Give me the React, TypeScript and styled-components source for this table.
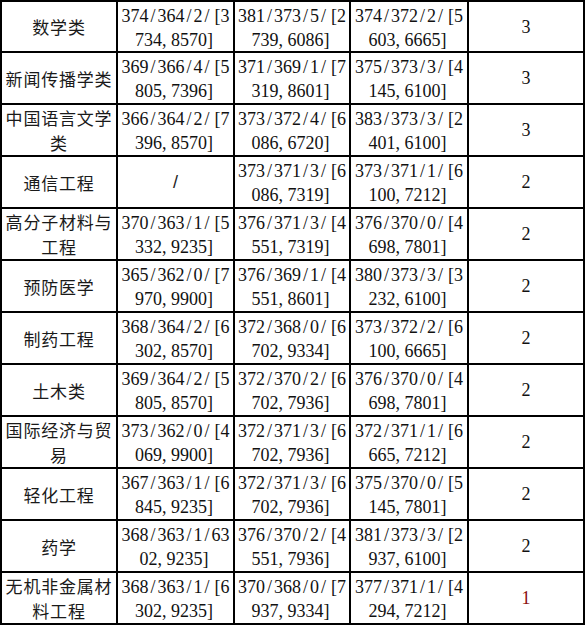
import React from "react";
import styled, { createGlobalStyle } from "styled-components";

const GlobalStyle = createGlobalStyle`
  html, body {
    margin: 0;
    padding: 0;
    background: #fff;
  }
`;

type Row = {
  major: string;
  y2018: string;
  y2017: string;
  y2016: string;
  count: string;
  highlight?: boolean;
};

// each "|" marks where the original cell wraps
const rows: Row[] = [
  { major: "数学类", y2018: "374/364/2/[3|734,8570]", y2017: "381/373/5/[2|739,6086]", y2016: "374/372/2/[5|603,6665]", count: "3" },
  { major: "新闻传播学类", y2018: "369/366/4/[5|805,7396]", y2017: "371/369/1/[7|319,8601]", y2016: "375/373/3/[4|145,6100]", count: "3" },
  { major: "中国语言文学|类", y2018: "366/364/2/[7|396,8570]", y2017: "373/372/4/[6|086,6720]", y2016: "383/373/3/[2|401,6100]", count: "3" },
  { major: "通信工程", y2018: "/", y2017: "373/371/3/[6|086,7319]", y2016: "373/371/1/[6|100,7212]", count: "2" },
  { major: "高分子材料与|工程", y2018: "370/363/1/[5|332,9235]", y2017: "376/371/3/[4|551,7319]", y2016: "376/370/0/[4|698,7801]", count: "2" },
  { major: "预防医学", y2018: "365/362/0/[7|970,9900]", y2017: "376/369/1/[4|551,8601]", y2016: "380/373/3/[3|232,6100]", count: "2" },
  { major: "制药工程", y2018: "368/364/2/[6|302,8570]", y2017: "372/368/0/[6|702,9334]", y2016: "373/372/2/[6|100,6665]", count: "2" },
  { major: "土木类", y2018: "369/364/2/[5|805,8570]", y2017: "372/370/2/[6|702,7936]", y2016: "376/370/0/[4|698,7801]", count: "2" },
  { major: "国际经济与贸|易", y2018: "373/362/0/[4|069,9900]", y2017: "372/371/3/[6|702,7936]", y2016: "372/371/1/[6|665,7212]", count: "2" },
  { major: "轻化工程", y2018: "367/363/1/[6|845,9235]", y2017: "372/371/3/[6|702,7936]", y2016: "375/370/0/[5|145,7801]", count: "2" },
  { major: "药学", y2018: "368/363/1/63|02,9235]", y2017: "376/370/2/[4|551,7936]", y2016: "381/373/3/[2|937,6100]", count: "2" },
  { major: "无机非金属材|料工程", y2018: "368/363/1/[6|302,9235]", y2017: "370/368/0/[7|937,9334]", y2016: "377/371/1/[4|294,7212]", count: "1", highlight: true },
];

const Table = styled.div`
  display: grid;
  grid-template-columns: 114px 115px 114px 116px 114px;
  grid-template-rows: 49px repeat(11, 50px);
  gap: 2px;
  padding: 2px;
  width: 585px;
  box-sizing: border-box;
  background: #000;
`;

const Cell = styled.div<{ $shift?: number }>`
  display: flex;
  flex-direction: column;
  align-items: center;
  justify-content: center;
  background: #fff;
  padding-top: ${(p) => p.$shift ?? 0}px;
  box-sizing: border-box;
  overflow: hidden;
`;

const NameLine = styled.div`
  font-family: "Noto Sans CJK SC", "Noto Sans", sans-serif;
  font-size: 17px;
  letter-spacing: 0.8px;
  line-height: 25px;
  color: #1a1a1a;
  white-space: nowrap;
`;

const NumLine = styled.div<{ $red?: boolean }>`
  font-family: "Liberation Serif", "Noto Sans CJK SC", serif;
  font-size: 18px;
  line-height: 24px;
  color: ${(p) => (p.$red ? "#8a0f0f" : "#111")};
  white-space: nowrap;
`;

const Glyph = styled.span<{ $align: string }>`
  display: inline-block;
  width: 9px;
  text-align: ${(p) => p.$align};
`;

const Slash = styled.div`
  font-family: "Liberation Sans", sans-serif;
  font-size: 18px;
  color: #222;
`;

// the original uses a fixed half-width font, so every character takes 9px
function alignOf(ch: string) {
  if (ch === "," || ch === "]") return "left";
  if (ch === "[") return "right";
  return "center";
}

function Mono({ text, red }: { text: string; red?: boolean }) {
  return (
    <NumLine $red={red}>
      {text.split("").map((ch, i) => (
        <Glyph key={i} $align={alignOf(ch)}>
          {ch}
        </Glyph>
      ))}
    </NumLine>
  );
}

function ScoreCell({ value }: { value: string }) {
  if (value === "/") {
    return (
      <Cell>
        <Slash>/</Slash>
      </Cell>
    );
  }
  const lines = value.split("|");
  return (
    <Cell $shift={lines.length > 1 ? 2 : 0}>
      {lines.map((l, i) => (
        <Mono key={i} text={l} />
      ))}
    </Cell>
  );
}

export default function App() {
  return (
    <>
      <GlobalStyle />
      <Table>
        {rows.map((r) => {
          const names = r.major.split("|");
          return (
            <React.Fragment key={r.major}>
              <Cell>
                {names.map((n, i) => (
                  <NameLine key={i}>{n}</NameLine>
                ))}
              </Cell>
              <ScoreCell value={r.y2018} />
              <ScoreCell value={r.y2017} />
              <ScoreCell value={r.y2016} />
              <Cell>
                <NumLine $red={r.highlight}>{r.count}</NumLine>
              </Cell>
            </React.Fragment>
          );
        })}
      </Table>
    </>
  );
}
